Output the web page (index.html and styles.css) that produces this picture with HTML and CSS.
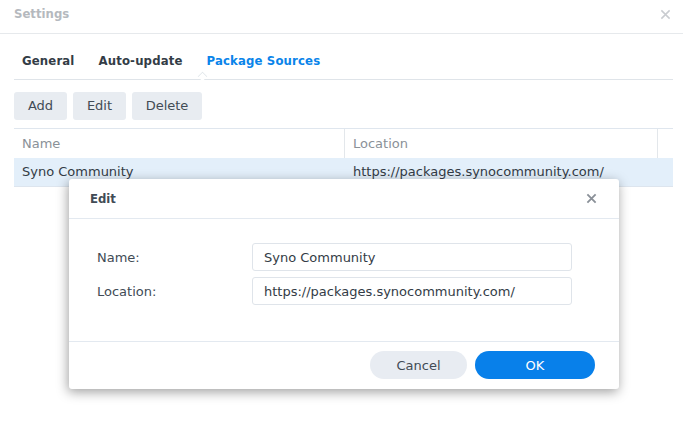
FILE: index.html
```html
<!DOCTYPE html>
<html>
<head>
<meta charset="utf-8">
<link rel="stylesheet" href="styles.css">
</head>
<body>
<div class="window">
  <div class="titlebar">
    <span class="title">Settings</span>
    <svg class="close-x" width="12" height="12" viewBox="0 0 12 12"><path d="M1.5 1.5L10.5 10.5M10.5 1.5L1.5 10.5" stroke="#c9ccd0" stroke-width="1.6" fill="none"/></svg>
  </div>
  <div class="content">
    <div class="tabs">
      <span class="tab">General</span>
      <span class="tab">Auto-update</span>
      <span class="tab active">Package Sources</span>
    </div>
    <div class="toolbar">
      <button class="btn">Add</button>
      <button class="btn">Edit</button>
      <button class="btn">Delete</button>
    </div>
    <div class="table">
      <div class="thead">
        <div class="th c1">Name</div>
        <div class="th c2">Location</div>
        <div class="th c3"></div>
      </div>
      <div class="row selected">
        <div class="td c1">Syno Community</div>
        <div class="td c2">https://packages.synocommunity.com/</div>
      </div>
    </div>
  </div>
</div>

<div class="modal">
  <div class="modal-head">
    <span class="modal-title">Edit</span>
    <svg class="modal-x" width="12" height="12" viewBox="0 0 12 12"><path d="M1.5 1.5L10.5 10.5M10.5 1.5L1.5 10.5" stroke="#8a9098" stroke-width="2" fill="none"/></svg>
  </div>
  <div class="modal-body">
    <div class="field">
      <label class="flabel">Name:</label>
      <div class="finput">Syno Community</div>
    </div>
    <div class="field">
      <label class="flabel">Location:</label>
      <div class="finput">https://packages.synocommunity.com/</div>
    </div>
  </div>
  <div class="modal-foot">
    <button class="pill cancel">Cancel</button>
    <button class="pill ok">OK</button>
  </div>
</div>
</body>
</html>
```

FILE: styles.css
```css
* { box-sizing: border-box; }
html, body { margin: 0; padding: 0; background: #fff; }
body {
  width: 683px; height: 421px; overflow: hidden; position: relative;
  font-family: "DejaVu Sans", sans-serif; font-size: 13px; color: #414b55;
}
button { font-family: inherit; font-size: 13px; border: none; margin: 0; cursor: pointer; }

.titlebar {
  height: 34px; border-bottom: 1px solid #e6e9ec;
  display: flex; align-items: flex-start; justify-content: space-between;
  padding: 5px 12px 0 14px;
}
.title {
  font-family: "DejaVu Sans Condensed", "DejaVu Sans", sans-serif;
  font-weight: bold; color: #b5b9be; font-size: 13px; line-height: 18px;
}
.close-x { margin-top: 4px; width: 11px; height: 11px; }

.content { padding: 0 10px 0 14px; }
.tabs {
  height: 46px; border-bottom: 1px solid #dfe4e9; position: relative;
  display: flex; align-items: flex-end; padding: 0 0 9px 8px; gap: 0;
}
.tab {
  font-family: "DejaVu Sans Condensed", "DejaVu Sans", sans-serif;
  font-weight: bold; color: #333c46; line-height: 18px; margin-right: 24px;
  letter-spacing: 0.15px;
}
.tab.active { color: #0a84ea; position: relative; }
.tab.active::after {
  content: ""; position: absolute; left: -9px; bottom: -11px;
  width: 8px; height: 8px; background: #fff;
  border-left: 1px solid #dfe4e9; border-top: 1px solid #dfe4e9;
  transform: rotate(45deg) scale(0.75);
}

.toolbar { display: flex; gap: 6px; padding-top: 12px; }
.btn {
  height: 28px; padding: 0 13px; background: #e8ecf1; color: #414b55;
  border-radius: 3px; line-height: 28px;
}
.btn:nth-child(1) { width: 53px; }
.btn:nth-child(2) { width: 53px; }
.btn:nth-child(3) { width: 70px; }

.table { margin-top: 8px; border-top: 1px solid #dfe6ee; }
.thead { display: flex; height: 29px; }
.th { color: #8a9198; line-height: 29px; padding-left: 8px; }
.thead .c1 { border-right: 1px solid #e3e7eb; }
.thead .c2 { border-right: 1px solid #e3e7eb; }
.c1 { width: 331px; }
.c2 { width: 313px; }
.c3 { flex: 1; }
.row { display: flex; height: 29px; border-bottom: 1px solid #dde5ee; }
.row.selected { background: #e3effa; }
.td { line-height: 28px; padding-left: 8px; color: #333c46; }

.modal {
  position: absolute; left: 69px; top: 179px; width: 550px; height: 210px;
  background: #fff; border-radius: 3px;
  box-shadow: -1px 3px 12px rgba(0,0,0,0.38);
  display: flex; flex-direction: column;
}
.modal-head {
  height: 40px; border-bottom: 1px solid #e3e9f0;
  display: flex; align-items: center; justify-content: space-between;
  padding: 0 22px 0 21px;
}
.modal-title {
  font-family: "DejaVu Sans Condensed", "DejaVu Sans", sans-serif;
  font-weight: bold; color: #414b55; margin-top: -1px;
}
.modal-x { width: 11px; height: 11px; }
.modal-body { flex: 1; padding: 24px 0 0 28px; display: flex; flex-direction: column; gap: 6px; }
.field { display: flex; align-items: center; }
.flabel { width: 155px; color: #414b55; padding-top: 1px; }
.finput {
  width: 320px; height: 28px; border: 1px solid #dfe4ea; border-radius: 3px;
  padding-left: 11px; line-height: 27px; color: #333c46;
}
.modal-foot {
  height: 48px; border-top: 1px solid #e3e9f0;
  display: flex; justify-content: flex-end; align-items: flex-start;
  padding: 9px 24px 0 0; gap: 8px;
}
.pill { height: 28px; border-radius: 14px; line-height: 28px; }
.cancel { width: 97px; background: #e8ecf2; color: #414b55; }
.ok { width: 120px; background: #0880ea; color: #fff; }
```
